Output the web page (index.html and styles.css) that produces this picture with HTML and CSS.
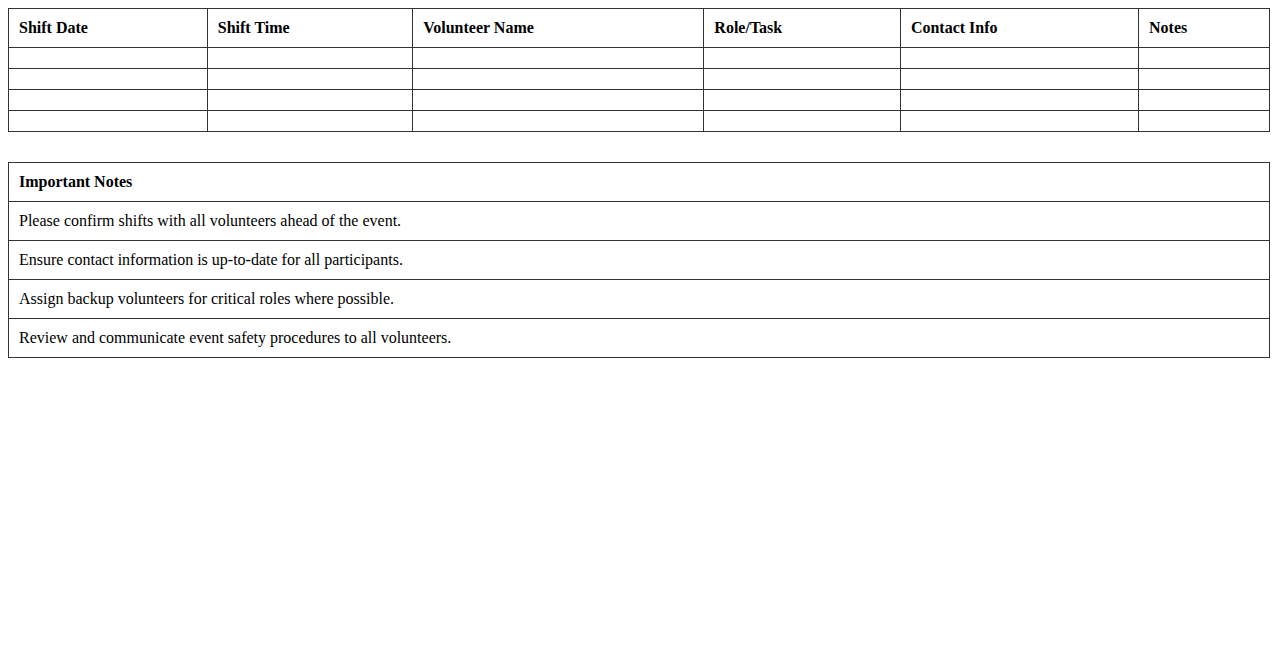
FILE: index.html
```html
<!DOCTYPE html>
<html>
<head>
<meta charset="utf-8">
<link rel="stylesheet" href="styles.css">
</head>
<body>
<table class="grid">
  <thead>
    <tr>
      <th>Shift Date</th>
      <th>Shift Time</th>
      <th>Volunteer Name</th>
      <th>Role/Task</th>
      <th>Contact Info</th>
      <th>Notes</th>
    </tr>
  </thead>
  <tbody>
    <tr><td></td><td></td><td></td><td></td><td></td><td></td></tr>
    <tr><td></td><td></td><td></td><td></td><td></td><td></td></tr>
    <tr><td></td><td></td><td></td><td></td><td></td><td></td></tr>
    <tr><td></td><td></td><td></td><td></td><td></td><td></td></tr>
  </tbody>
</table>
<table class="grid notes">
  <thead>
    <tr><th>Important Notes</th></tr>
  </thead>
  <tbody>
    <tr><td>Please confirm shifts with all volunteers ahead of the event.</td></tr>
    <tr><td>Ensure contact information is up-to-date for all participants.</td></tr>
    <tr><td>Assign backup volunteers for critical roles where possible.</td></tr>
    <tr><td>Review and communicate event safety procedures to all volunteers.</td></tr>
  </tbody>
</table>
</body>
</html>
```
FILE: styles.css
```css
body {
  margin: 8px;
  font-family: "Liberation Serif", "Times New Roman", serif;
  font-size: 16px;
  color: #000;
  background: #fff;
}
.grid {
  width: 100%;
  border-collapse: collapse;
  margin-bottom: 30px;
}
.grid th,
.grid td {
  border: 1px solid #333;
  padding: 10px;
  text-align: left;
}
.grid th {
  font-weight: bold;
}
```
